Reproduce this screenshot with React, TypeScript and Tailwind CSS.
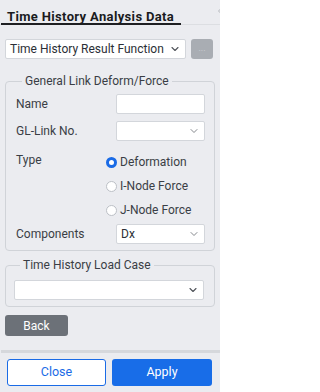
import { ChevronDown, ChevronLeft } from "lucide-react"

function Select({ value, className, bold }: { value?: string; className?: string; bold?: boolean }) {
  return (
    <div
      className={`flex items-center justify-between h-[20px] bg-white border border-[#d3d6db] rounded-[2px] pl-[4px] pr-[4px] ${className ?? ""}`}
    >
      <span className="text-[12px] text-[#2b2f36] leading-[14px] whitespace-nowrap">{value}</span>
      <ChevronDown
        className={`w-[12px] h-[12px] shrink-0 ${bold ? "text-[#50545a]" : "text-[#666a70]"}`}
        strokeWidth={bold ? 2.2 : 1.6}
      />
    </div>
  )
}

function Radio({ label, checked }: { label: string; checked?: boolean }) {
  return (
    <div className="flex items-center h-[20px] gap-[3px]">
      {checked ? (
        <span className="w-[11px] h-[11px] rounded-full border-[3px] border-[#1a6be6] bg-white" />
      ) : (
        <span className="w-[11px] h-[11px] rounded-full border border-[#bcc0c6] bg-white" />
      )}
      <span className="text-[12px] text-[#3a3e45]">{label}</span>
    </div>
  )
}

function Row({ label, children }: { label: string; children: React.ReactNode }) {
  return (
    <div className="flex items-center h-[20px]">
      <span className="w-[100px] text-[12px] text-[#3a3e45]">{label}</span>
      {children}
    </div>
  )
}

export default function App() {
  return (
    <div
      className="w-[220px] h-[392px] bg-[#ebecf0] flex flex-col overflow-hidden"
      style={{ fontFamily: "Roboto, 'Liberation Sans', sans-serif" }}
    >
      {/* header tab */}
      <div className="flex items-start justify-between h-[25px] border-b border-[#dcdee2]">
        <div className="ml-[1px] w-[180px] h-[25px] border-b-2 border-[#1e1f22] pl-[6px] pt-[4px]">
          <span className="text-[13px] font-bold text-[#1a1b1e] tracking-[0.35px]">Time History Analysis Data</span>
        </div>
        <ChevronLeft className="w-[12px] h-[12px] mt-[5px] -mr-[6px] text-[#b5b8bd]" strokeWidth={2} />
      </div>

      <div className="flex flex-col px-[5px] pt-[14px]">
        <div className="flex items-center gap-[5px]">
          <Select value="Time History Result Function" className="w-[181px]" bold />
          <button className="w-[22px] h-[20px] rounded-[3px] bg-[#a9adb3] text-[#cdd0d4] text-[9px] leading-none pb-[2px]">
            ...
          </button>
        </div>

        <fieldset className="mt-[15px] border border-[#d0d3d8] rounded-[4px] pl-[10px] pr-[7px] pb-[6px]">
          <legend className="ml-[6px] px-[3px] text-[12px] text-[#3a3e45] leading-[14px]">
            General Link Deform/Force
          </legend>
          <div className="flex flex-col pt-[6px]">
            <Row label="Name">
              <div className="w-[89px] h-[20px] bg-white border border-[#d3d6db] rounded-[2px]" />
            </Row>
            <div className="mt-[7px]">
              <Row label="GL-Link No.">
                <Select className="w-[89px]" />
              </Row>
            </div>
            <div className="flex mt-[11px]">
              <span className="w-[90px] text-[12px] text-[#3a3e45] leading-[16px]">Type</span>
              <div className="flex flex-col gap-[4px]">
                <Radio label="Deformation" checked />
                <Radio label="I-Node Force" />
                <Radio label="J-Node Force" />
              </div>
            </div>
            <div className="mt-[4px]">
              <Row label="Components">
                <Select value="Dx" className="w-[89px]" />
              </Row>
            </div>
          </div>
        </fieldset>

        <fieldset className="mt-[7px] border border-[#d0d3d8] rounded-[4px] pl-[8px] pr-[7px] pb-[6px]">
          <legend className="ml-[6px] px-[3px] text-[12px] text-[#3a3e45] leading-[14px]">
            Time History Load Case
          </legend>
          <div className="pt-[8px]">
            <Select className="w-[190px]" bold />
          </div>
        </fieldset>

        <button className="mt-[8px] w-[63px] h-[21px] rounded-[3px] bg-[#6c7178] text-white text-[12px]">
          Back
        </button>
      </div>

      <div className="mt-[14px] ml-[1px] h-[3px] bg-[#d6d8dc]" />

      <div className="flex gap-[6px] px-[7px] pt-[6px]">
        <button className="w-[99px] h-[27px] rounded-[3px] bg-white border border-[#1a6be6] text-[#1a6be6] text-[12.5px]">
          Close
        </button>
        <button className="w-[100px] h-[27px] rounded-[3px] bg-[#186de8] text-white text-[12.5px]">
          Apply
        </button>
      </div>
    </div>
  )
}
